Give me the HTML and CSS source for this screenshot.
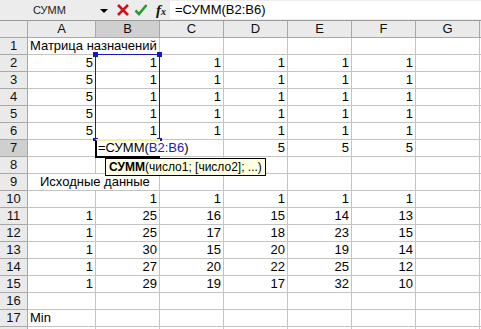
FILE: index.html
```html
<!DOCTYPE html>
<html lang="ru">
<head>
  <meta charset="UTF-8">
  <title>Книга1</title>
  <link rel="stylesheet" href="styles.css">
</head>
<body>
  <div class="fbar">
    <div class="namebox">
      <span class="nb-text">СУММ</span>
      <span class="nb-arrow"></span>
    </div>
    <div class="fbtns">
      <svg class="ico" width="14" height="14" viewBox="0 0 14 14">
        <path d="M2 2 L12 12 M12 2 L2 12" stroke="#c8141e" stroke-width="2.6" fill="none"/>
      </svg>
      <svg class="ico" width="14" height="14" viewBox="0 0 14 14">
        <path d="M1.5 7.5 L5 11 L12.5 2" stroke="#2a9a2a" stroke-width="2.6" fill="none"/>
      </svg>
      <span class="fx">f<small>x</small></span>
    </div>
    <div class="finput">=СУММ(B2:B6)</div>
  </div>

  <div class="sheet" id="sheet">
    <div class="range">
      <i class="h tl"></i><i class="h tr"></i><i class="h bl"></i><i class="h br"></i>
    </div>
    <div class="active"></div>
    <div class="tip"><b>СУММ</b>(число1; [число2]; ...)</div>
  </div>

  <script>
    const sheet = document.getElementById('sheet');
    const cols = ['A', 'B', 'C', 'D', 'E', 'F', 'G', ''];

    // данные листа, строка за строкой
    const data = [
      [{ t: 'Матрица назначений', span: 2 }],
      [5, 1, 1, 1, 1, 1],
      [5, 1, 1, 1, 1, 1],
      [5, 1, 1, 1, 1, 1],
      [5, 1, 1, 1, 1, 1],
      [5, 1, 1, 1, 1, 1],
      ['', { edit: true, span: 2 }, 5, 5, 5],
      [],
      [{ t: 'Исходные данные', span: 2, cls: 'indent' }],
      ['', 1, 1, 1, 1, 1],
      [1, 25, 16, 15, 14, 13],
      [1, 25, 17, 18, 23, 15],
      [1, 30, 15, 20, 19, 14],
      [1, 27, 20, 22, 25, 12],
      [1, 29, 19, 17, 32, 10],
      [],
      ['Min'],
      []
    ];

    function cell(cls, html, span) {
      const d = document.createElement('div');
      d.className = cls;
      d.innerHTML = html;
      if (span) d.style.gridColumn = 'span ' + span;
      sheet.appendChild(d);
    }

    cell('hd corner', '');
    cols.forEach(c => cell('hd' + (c === 'B' ? ' sel' : ''), c));

    data.forEach((row, r) => {
      // последняя строка видна только краем, номер не помещается
      const label = r < data.length - 1 ? r + 1 : '';
      cell('rh' + (r === 6 ? ' sel' : ''), label);
      let used = 0;
      row.forEach(v => {
        if (v && v.edit) {
          cell('c edit', '=СУММ(<span class="ref">B2:B6</span>)', v.span);
          used += v.span;
        } else if (v && v.t) {
          cell('c txt ' + (v.cls || ''), v.t, v.span);
          used += v.span;
        } else if (typeof v === 'number') {
          cell('c num', v);
          used++;
        } else {
          cell('c txt', v);
          used++;
        }
      });
      for (; used < cols.length; used++) cell('c', '');
    });
  </script>
</body>
</html>
```

FILE: styles.css
```css
body {
  margin: 0;
  width: 481px;
  height: 329px;
  overflow: hidden;
  background: #fff;
  font-family: "Liberation Sans", Arial, sans-serif;
}
.fbar {
  display: flex;
  align-items: center;
  height: 20px;
  background: #ececec;
  border-bottom: 1px solid #9a9a9a;
}
.namebox {
  display: flex;
  align-items: center;
  width: 116px;
  height: 20px;
  font-size: 11px;
  color: #222;
}
.nb-text {
  padding-left: 33px;
  width: 67px;
}
.nb-arrow {
  width: 0;
  height: 0;
  border-left: 4px solid transparent;
  border-right: 4px solid transparent;
  border-top: 4px solid #000;
  margin-top: 1px;
}
.fbtns {
  display: flex;
  align-items: center;
  gap: 4px;
  width: 54px;
}
.ico {
  display: block;
}
.fx {
  font-family: "Liberation Serif", serif;
  font-style: italic;
  font-weight: bold;
  font-size: 15px;
  color: #111;
  margin-left: 4px;
}
.fx small {
  font-size: 10px;
}
.finput {
  flex: 1;
  height: 18px;
  line-height: 18px;
  background: #fff;
  font-size: 13px;
  padding-left: 5px;
}
.sheet {
  position: relative;
  display: grid;
  grid-template-columns: 28px 68px repeat(6, 64px) 2px;
  grid-auto-rows: 17px;
  font-size: 13px;
}
.hd, .rh {
  box-sizing: border-box;
  background: #eaeaea;
  border-right: 1px solid #a8a8a8;
  border-bottom: 1px solid #a8a8a8;
  text-align: center;
  line-height: 16px;
  color: #111;
}
.sel {
  background: #cfcfcf;
}
.c {
  box-sizing: border-box;
  border-right: 1px solid #c4c4c4;
  border-bottom: 1px solid #c4c4c4;
  line-height: 16px;
  white-space: nowrap;
  overflow: hidden;
}
.num {
  text-align: right;
  padding-right: 2px;
}
.txt {
  padding-left: 2px;
}
.indent {
  padding-left: 12px;
}
.edit {
  padding-left: 2px;
  background: #fff;
}
.ref {
  color: #2020c0;
}
.range {
  position: absolute;
  left: 95px;
  top: 33px;
  width: 65px;
  height: 86px;
  box-sizing: border-box;
  border: 1px solid #1818b8;
}
.h {
  position: absolute;
  width: 5px;
  height: 5px;
  background: #1818b8;
}
.tl { left: -3px; top: -3px; }
.tr { right: -3px; top: -3px; }
.bl { left: -3px; bottom: -2px; height: 3px; }
.br { right: -3px; bottom: -2px; height: 3px; }
.active {
  position: absolute;
  left: 95px;
  top: 118px;
  width: 65px;
  height: 19px;
  box-sizing: border-box;
  border-left: 2px solid #000;
  border-bottom: 2px solid #000;
  border-top: 2px solid #f2f2a0;
}
.tip {
  position: absolute;
  left: 105px;
  top: 137px;
  height: 18px;
  box-sizing: border-box;
  padding: 0 3px;
  background: #ffffe1;
  border: 1px solid #000;
  font-size: 12px;
  line-height: 16px;
  white-space: nowrap;
}
```
